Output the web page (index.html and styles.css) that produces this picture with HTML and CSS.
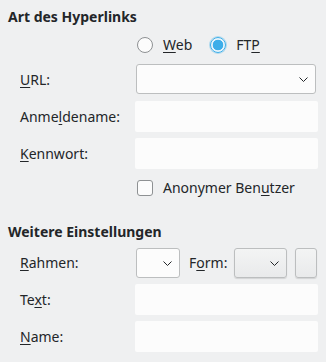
FILE: index.html
```html
<!DOCTYPE html>
<html lang="de">
<head>
    <meta charset="UTF-8">
    <title>Hyperlink</title>
    <link rel="stylesheet" href="styles.css">
</head>
<body>
    <h2 class="heading">Art des Hyperlinks</h2>
    <div class="radios">
        <label class="radio"><span class="dot"></span><span><u>W</u>eb</span></label>
        <label class="radio"><span class="dot on"></span><span>FT<u>P</u></span></label>
    </div>

    <div class="form">
        <div class="label"><u>U</u>RL:</div>
        <div class="combo wide"><span></span><svg class="arrow" width="9" height="5" viewBox="0 0 9 5"><path d="M0.5 0.5 L4.5 4.5 L8.5 0.5" fill="none" stroke="#232629" stroke-width="1"/></svg></div>

        <div class="label">Anme<u>l</u>dename:</div>
        <div class="field"></div>

        <div class="label"><u>K</u>ennwort:</div>
        <div class="field"></div>

        <div></div>
        <label class="check"><span class="box"></span><span>Anonymer Ben<u>u</u>tzer</span></label>
    </div>

    <h2 class="heading second">Weitere Einstellungen</h2>

    <div class="form">
        <div class="label"><u>R</u>ahmen:</div>
        <div class="frame-row">
            <div class="combo small"><span></span><svg class="arrow" width="9" height="5" viewBox="0 0 9 5"><path d="M0.5 0.5 L4.5 4.5 L8.5 0.5" fill="none" stroke="#232629" stroke-width="1"/></svg></div>
            <span class="inline-label">F<u>o</u>rm:</span>
            <div class="combo button"><span></span><svg class="arrow" width="9" height="5" viewBox="0 0 9 5"><path d="M0.5 0.5 L4.5 4.5 L8.5 0.5" fill="none" stroke="#232629" stroke-width="1"/></svg></div>
            <div class="tool"></div>
        </div>

        <div class="label">Te<u>x</u>t:</div>
        <div class="field"></div>

        <div class="label"><u>N</u>ame:</div>
        <div class="field"></div>
    </div>
</body>
</html>
```

FILE: styles.css
```css
* {
    margin: 0;
    padding: 0;
    box-sizing: border-box;
}
body {
    background-color: #eff0f1;
    color: #232629;
    font-family: "Noto Sans", sans-serif;
    font-size: 14px;
    line-height: 18px;
    width: 326px;
    height: 362px;
    overflow: hidden;
}
u {
    text-decoration: underline;
    text-underline-offset: 2px;
}
.heading {
    font-size: 14px;
    font-weight: bold;
    padding-left: 8px;
    margin-top: 8px;
}
.heading.second {
    margin-top: 26px;
}
.radios {
    display: flex;
    padding-left: 137px;
    margin-top: 11px;
    height: 16px;
    align-items: center;
}
.radio {
    display: flex;
    align-items: center;
}
.radio ~ .radio {
    margin-left: 18px;
}
.dot {
    width: 16px;
    height: 16px;
    border-radius: 50%;
    border: 1px solid #8e9193;
    background-color: #fcfcfc;
    margin-right: 10px;
}
.dot.on {
    border-color: #3daee9;
    background: radial-gradient(circle, #3daee9 0, #3daee9 5px, #e8f4fb 5.6px);
    box-shadow: 0 0 0 1px rgba(61, 174, 233, 0.35);
}
.form {
    display: grid;
    grid-template-columns: 115px 1fr;
    row-gap: 6px;
    padding-left: 20px;
    padding-right: 8px;
    align-items: center;
}
.radios + .form {
    margin-top: 11px;
}
.field {
    height: 31px;
    background-color: #fcfcfc;
    border-radius: 2px;
}
.combo {
    height: 30px;
    border: 1px solid #bcbebf;
    border-radius: 3px;
    background-color: #fcfcfc;
    display: flex;
    align-items: center;
    justify-content: space-between;
    padding-right: 7px;
}
.combo.wide {
    margin: 0 2px 1px 1px;
}
.arrow {
    display: block;
}
.check {
    display: flex;
    align-items: center;
    margin: 4px 0 0 2px;
}
.box {
    width: 16px;
    height: 16px;
    border: 1px solid #8e9193;
    border-radius: 3px;
    background-color: #fcfcfc;
    margin-right: 10px;
}
.second + .form {
    margin-top: 7px;
}
.frame-row {
    display: flex;
    align-items: center;
    padding-left: 1px;
}
.combo.small {
    width: 44px;
}
.inline-label {
    width: 45px;
    margin-left: 9px;
    white-space: nowrap;
}
.combo.button {
    width: 53px;
    background: linear-gradient(#f3f4f4, #e9eaeb);
    box-shadow: 0 1px 1px rgba(0, 0, 0, 0.12);
}
.tool {
    width: 22px;
    height: 30px;
    margin-left: 8px;
    border: 1px solid #bcbebf;
    border-radius: 3px;
    background: linear-gradient(#f3f4f4, #e9eaeb);
    box-shadow: 0 1px 1px rgba(0, 0, 0, 0.12);
}
```
